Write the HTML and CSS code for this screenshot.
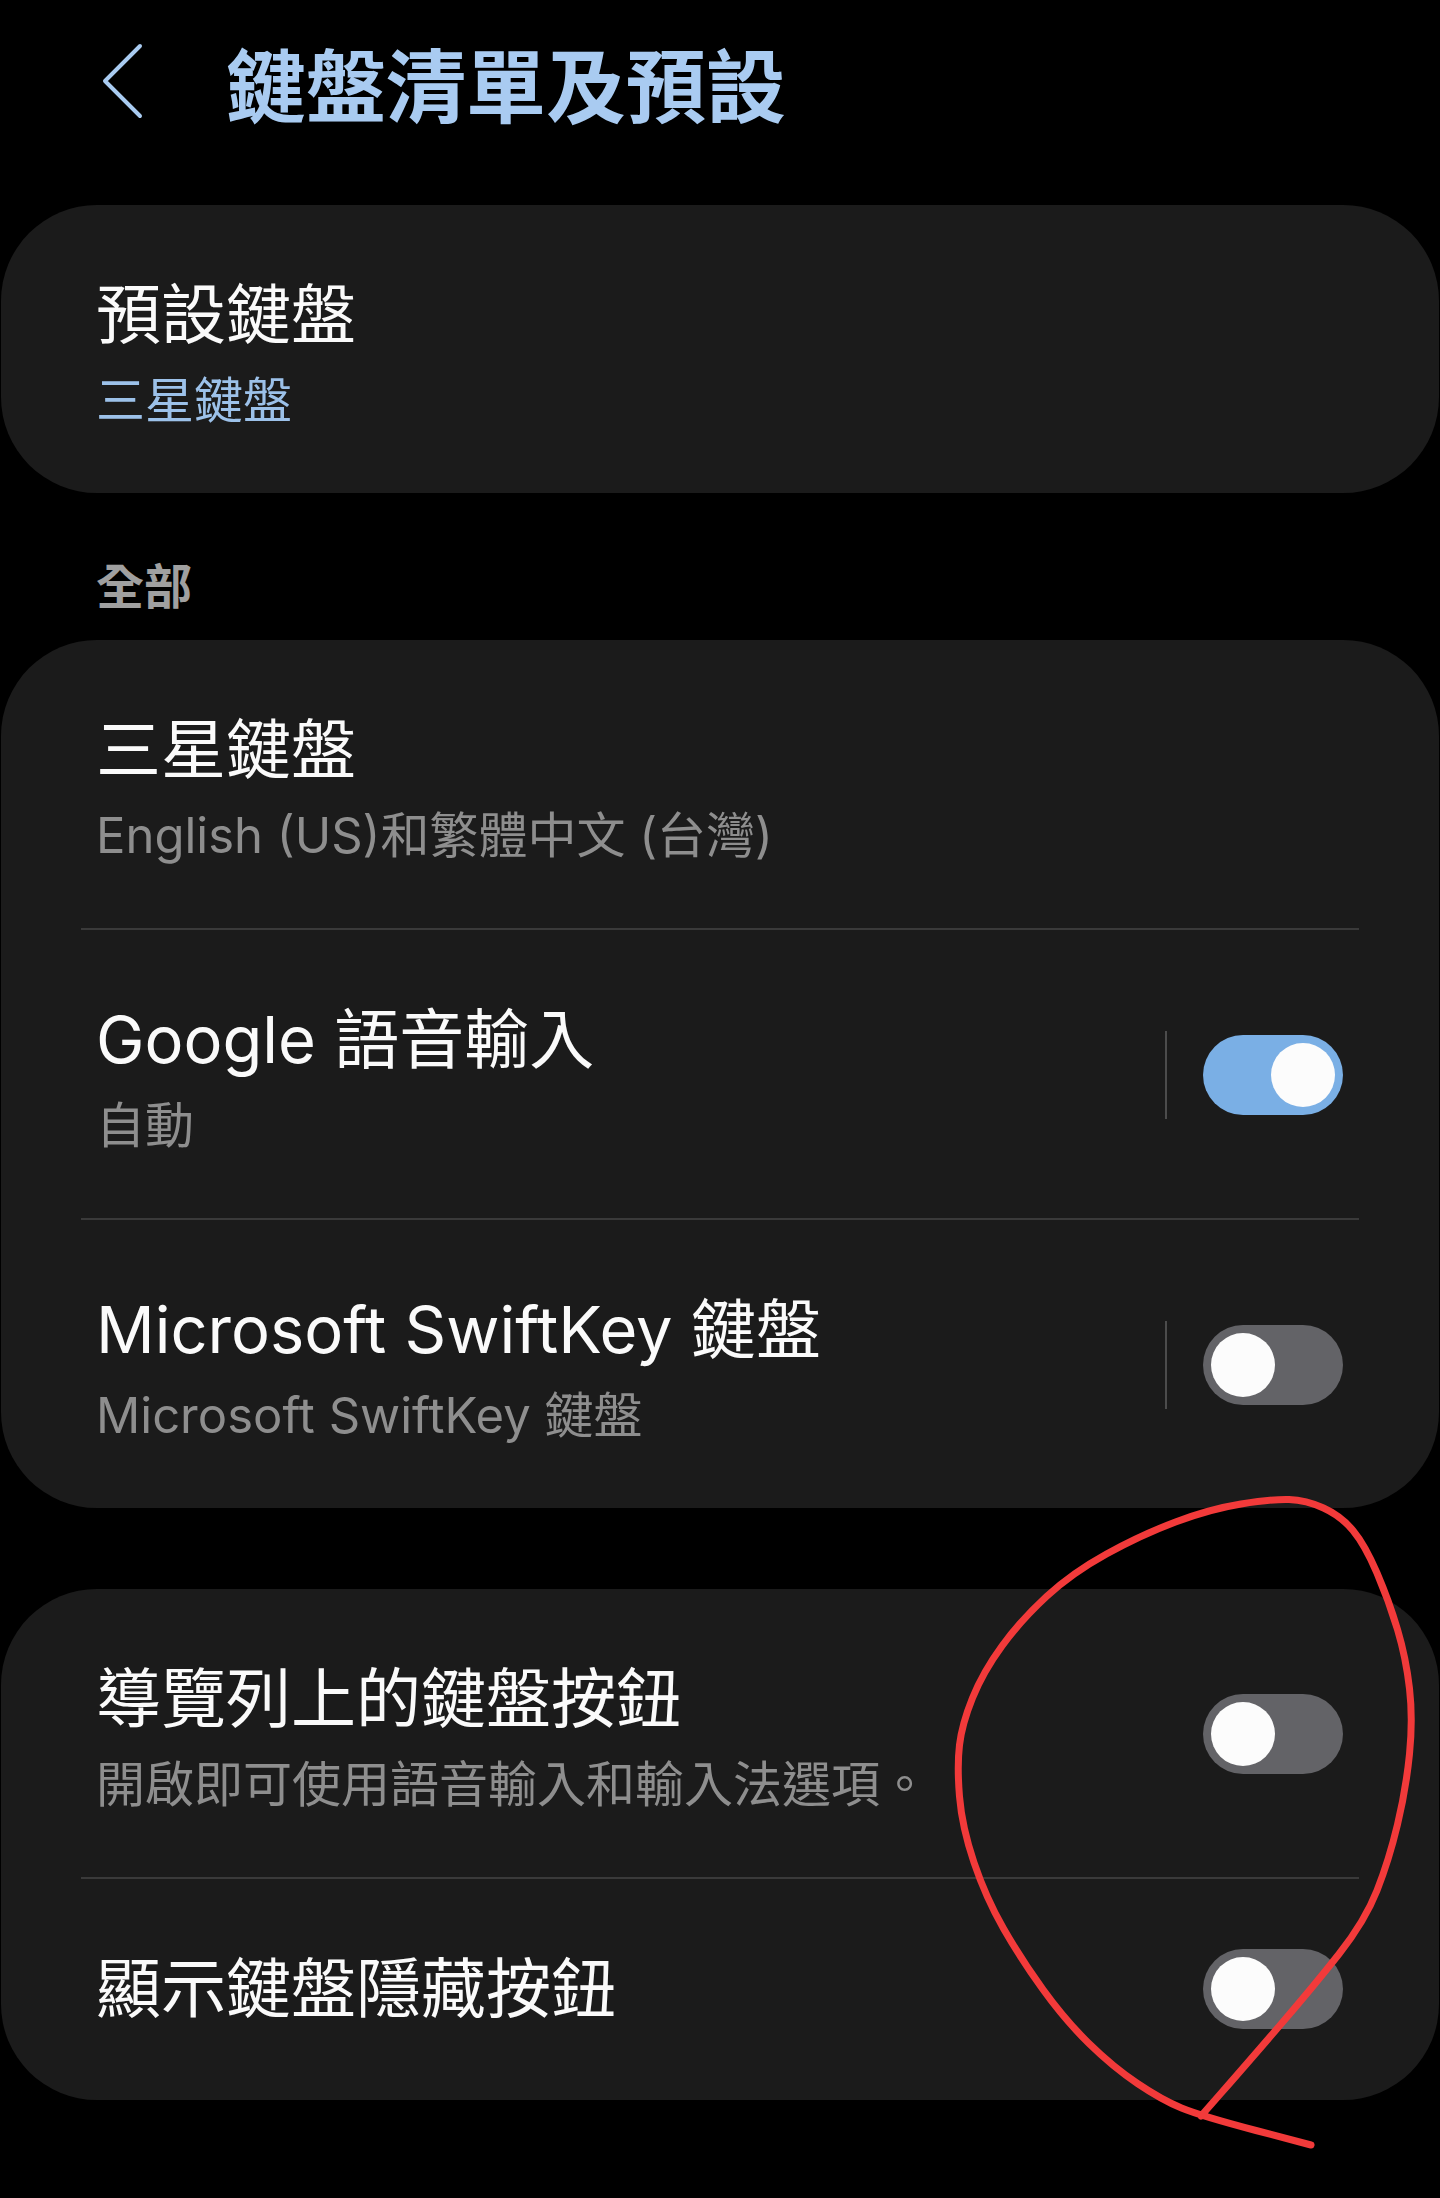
FILE: index.html
```html
<!DOCTYPE html>
<html lang="zh-Hant">
<head>
  <meta charset="UTF-8" />
  <meta name="viewport" content="width=device-width, initial-scale=1.0"/>
  <title>鍵盤清單及預設</title>
  <link rel="stylesheet" href="styles.css">
</head>
<body>
  <div class="screen">
    <header class="topbar">
      <svg class="back" width="44" height="76" viewBox="0 0 44 76">
        <polyline points="39,3 4,38 39,73" />
      </svg>
      <h1 class="title">鍵盤清單及預設</h1>
    </header>

    <section class="card">
      <div class="row">
        <div class="text">
          <div class="label">預設鍵盤</div>
          <div class="sub accent">三星鍵盤</div>
        </div>
      </div>
    </section>

    <div class="section-title">全部</div>

    <section class="card">
      <div class="row">
        <div class="text">
          <div class="label">三星鍵盤</div>
          <div class="sub">English (US)和繁體中文 (台灣)</div>
        </div>
      </div>
      <hr class="divider">
      <div class="row">
        <div class="text">
          <div class="label">Google 語音輸入</div>
          <div class="sub">自動</div>
        </div>
        <span class="vsep"></span>
        <span class="switch on"><span class="thumb"></span></span>
      </div>
      <hr class="divider">
      <div class="row">
        <div class="text">
          <div class="label">Microsoft SwiftKey 鍵盤</div>
          <div class="sub">Microsoft SwiftKey 鍵盤</div>
        </div>
        <span class="vsep"></span>
        <span class="switch"><span class="thumb"></span></span>
      </div>
    </section>

    <section class="card card-gap">
      <div class="row">
        <div class="text">
          <div class="label">導覽列上的鍵盤按鈕</div>
          <div class="sub">開啟即可使用語音輸入和輸入法選項。</div>
        </div>
        <span class="switch"><span class="thumb"></span></span>
      </div>
      <hr class="divider">
      <div class="row single">
        <div class="text">
          <div class="label">顯示鍵盤隱藏按鈕</div>
        </div>
        <span class="switch"><span class="thumb"></span></span>
      </div>
    </section>

    <!-- hand-drawn red circle marking the toggles -->
    <svg class="annotation" width="1440" height="2198" viewBox="0 0 1440 2198">
      <path d="M1201 2116 L1222.5 2091.5 Q1244 2067 1278.5 2027 Q1313 1987 1339 1954 Q1365 1921 1377 1890.5 Q1389 1860 1397.5 1824.5 Q1406 1789 1409.5 1754 Q1413 1719 1409.5 1688.5 Q1406 1658 1397.5 1629.5 Q1389 1601 1377 1573 Q1365 1545 1353 1530.5 Q1341 1516 1323.5 1508 Q1306 1500 1289 1499.5 Q1272 1499 1241 1504 Q1210 1509 1175.5 1522 Q1141 1535 1106.5 1554 Q1072 1573 1046.5 1596.5 Q1021 1620 1002 1646 Q983 1672 972.5 1698 Q962 1724 959.5 1745 Q957 1766 959.5 1796.5 Q962 1827 974 1862.5 Q986 1898 1003.5 1928.5 Q1021 1959 1043 1989.5 Q1065 2020 1089 2043.5 Q1113 2067 1137.5 2083.5 Q1162 2100 1181.5 2108 Q1201 2116 1256 2130.5 L1311 2145" />
    </svg>
  </div>
</body>
</html>
```

FILE: styles.css
```css
:root {
  --blue: #a9cbf1;
  --blue-soft: #9cc1e9;
  --card: #1b1b1b;
  --line: #3a3a3a;
  --grey: #8e8e8e;
}

* {
  box-sizing: border-box;
}

body {
  margin: 0;
  background: #000;
  color: #fafafa;
  font-family: Inter, "Noto Sans CJK TC", sans-serif;
}

.screen {
  position: relative;
  width: 1440px;
  height: 2198px;
  overflow: hidden;
}

.topbar {
  display: flex;
  align-items: center;
  height: 162px;
  padding-left: 101px;
}

.back {
  flex: none;
}

.back polyline {
  fill: none;
  stroke: var(--blue);
  stroke-width: 4;
  stroke-linecap: round;
  stroke-linejoin: round;
}

.title {
  margin: 0 0 0 81px;
  font-family: "Noto Sans CJK TC", sans-serif;
  font-size: 80px;
  font-weight: 700;
  line-height: 90px;
  color: var(--blue);
}

.card {
  margin: 43px 1px 0;
  background: var(--card);
  border-radius: 96px;
}

.card-gap {
  margin-top: 81px;
}

.section-title {
  margin: 60px 0 27px;
  padding-left: 96px;
  font-family: "Noto Sans CJK TC", sans-serif;
  font-size: 48px;
  font-weight: 700;
  line-height: 60px;
  color: #a0a0a0;
}

.section-title + .card {
  margin-top: 0;
}

.row {
  display: flex;
  align-items: center;
  padding: 70px 96px 62px 95px;
}

.row.single {
  padding-bottom: 71px;
}

.text {
  flex: 1;
  min-width: 0;
}

.label {
  font-size: 65px;
  line-height: 80px;
  white-space: nowrap;
}

.sub {
  margin-top: 16px;
  font-size: 49px;
  line-height: 60px;
  color: var(--grey);
  white-space: nowrap;
}

.sub.accent {
  color: var(--blue-soft);
}

.divider {
  margin: 0 80px;
  height: 2px;
  border: none;
  background: var(--line);
}

.vsep {
  flex: none;
  width: 2px;
  height: 88px;
  margin: 0 36px 6px 0;
  background: #4c4c4c;
}

.switch {
  flex: none;
  display: flex;
  align-items: center;
  width: 140px;
  height: 80px;
  margin-bottom: 6px;
  padding: 0 8px;
  border-radius: 40px;
  background: #636367;
}

.row.single .switch {
  margin-bottom: 0;
}

.switch.on {
  justify-content: flex-end;
  background: #7aafe5;
}

.thumb {
  width: 64px;
  height: 64px;
  border-radius: 50%;
  background: #fcfcfc;
}

.annotation {
  position: absolute;
  left: 0;
  top: 0;
  pointer-events: none;
}

.annotation path {
  fill: none;
  stroke: #f23a3a;
  stroke-width: 7;
  stroke-linecap: round;
  stroke-linejoin: round;
}
```
